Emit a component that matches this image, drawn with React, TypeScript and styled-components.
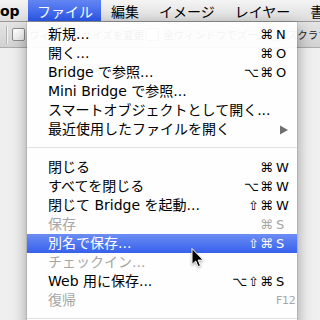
import React from "react";
import styled, { createGlobalStyle, css } from "styled-components";

const Global = createGlobalStyle`
  html, body { margin: 0; padding: 0; }
  body {
    width: 320px;
    height: 320px;
    overflow: hidden;
    background: #eeeeee;
    font-family: "DejaVu Sans", "Noto Sans CJK JP", sans-serif;
  }
`;

const Screen = styled.div`
  position: relative;
  width: 320px;
  height: 320px;
  overflow: hidden;
  display: flex;
  flex-direction: column;
`;

const MenuBar = styled.div`
  height: 21px;
  display: flex;
  align-items: stretch;
  background: linear-gradient(#f4f4f4, #dcdcdc);
  border-bottom: 1px solid #9a9a9a;
  font-size: 14px;
  white-space: nowrap;
  overflow: hidden;
`;

const AppName = styled.div`
  display: flex;
  align-items: center;
  width: 28px;
  flex: none;
  font-weight: bold;
  color: #000;
`;

const MenuTitle = styled.div<{ $active?: boolean }>`
  display: flex;
  align-items: center;
  flex: none;
  padding: 0 10px;
  color: #000;
  ${(p) =>
    p.$active &&
    css`
      padding: 0 8px 0 9px;
      color: #fff;
      background: linear-gradient(#6385f2, #2b57e9);
    `}
`;

const OptionsBar = styled.div`
  height: 25px;
  display: flex;
  align-items: center;
  padding-left: 6px;
  background: linear-gradient(#e4e4e4, #d2d2d2);
  border-bottom: 1px solid #ababab;
  font-size: 10.5px;
  white-space: nowrap;
  overflow: hidden;
`;

const Divider = styled.div`
  flex: none;
  width: 1px;
  height: 18px;
  background: #b4b4b4;
  border-right: 1px solid #f2f2f2;
  margin-right: 4px;
`;

const Check = styled.div`
  flex: none;
  width: 11px;
  height: 11px;
  border: 1px solid #8c8c8c;
  border-radius: 2px;
  background: linear-gradient(#ffffff, #ececec);
`;

const OptionLabel = styled.span`
  flex: none;
  color: #222;
  margin: 0 2px 0 4px;
`;

const Workspace = styled.div`
  flex: 1;
  background: #efefef;
`;

const Dropdown = styled.div`
  position: absolute;
  top: 22px;
  left: 27px;
  width: 270px;
  padding-top: 3px;
  background: rgba(255, 255, 255, 0.94);
  box-shadow: 0 0 0 1px rgba(0, 0, 0, 0.08), 0 5px 14px rgba(0, 0, 0, 0.38);
  font-size: 14px;
`;

const Row = styled.div<{ $disabled?: boolean; $selected?: boolean }>`
  display: flex;
  align-items: center;
  height: 19px;
  line-height: 19px;
  padding: 0 3px 0 21px;
  white-space: nowrap;
  color: ${(p) => (p.$disabled ? "#a6a6a6" : "#000")};
  ${(p) =>
    p.$selected &&
    css`
      color: #fff;
      background: linear-gradient(#6b8df4, #3760ec);
    `}
`;

const Label = styled.span`
  flex: 1;
`;

const Mods = styled.span`
  font-size: 13px;
  letter-spacing: 1px;
  text-align: right;
`;

const Key = styled.span<{ $small?: boolean }>`
  width: 18px;
  margin-left: 2px;
  font-size: ${(p) => (p.$small ? "11px" : "13px")};
  letter-spacing: ${(p) => (p.$small ? "-0.3px" : "0")};
  display: flex;
  align-items: center;
  overflow: visible;
`;

const Separator = styled.div`
  height: 19px;
  display: flex;
  align-items: flex-start;
  padding-top: 8px;
  box-sizing: border-box;
  &::after {
    content: "";
    flex: 1;
    height: 1px;
    background: #e2e2e2;
  }
`;

const Cursor = styled.svg`
  position: absolute;
  left: 190px;
  top: 247px;
  filter: drop-shadow(0 1px 1px rgba(0, 0, 0, 0.35));
`;

type Item =
  | { sep: true }
  | {
      sep?: false;
      label: string;
      mods?: string;
      key?: string;
      disabled?: boolean;
      selected?: boolean;
      submenu?: boolean;
    };

const items: Item[] = [
  { label: "新規...", mods: "⌘", key: "N" },
  { label: "開く...", mods: "⌘", key: "O" },
  { label: "Bridge で参照...", mods: "⌥⌘", key: "O" },
  { label: "Mini Bridge で参照..." },
  { label: "スマートオブジェクトとして開く..." },
  { label: "最近使用したファイルを開く", submenu: true },
  { sep: true },
  { label: "閉じる", mods: "⌘", key: "W" },
  { label: "すべてを閉じる", mods: "⌥⌘", key: "W" },
  { label: "閉じて Bridge を起動...", mods: "⇧⌘", key: "W" },
  { label: "保存", mods: "⌘", key: "S", disabled: true },
  { label: "別名で保存...", mods: "⇧⌘", key: "S", selected: true },
  { label: "チェックイン...", disabled: true },
  { label: "Web 用に保存...", mods: "⌥⇧⌘", key: "S" },
  { label: "復帰", key: "F12", disabled: true },
  { sep: true },
];

export default function App() {
  return (
    <>
      <Global />
      <Screen>
        <MenuBar>
          <AppName>op</AppName>
          <MenuTitle $active>ファイル</MenuTitle>
          <MenuTitle>編集</MenuTitle>
          <MenuTitle>イメージ</MenuTitle>
          <MenuTitle>レイヤー</MenuTitle>
          <MenuTitle>書式</MenuTitle>
        </MenuBar>
        <OptionsBar>
          <Divider />
          <Check />
          <OptionLabel>ウィンドウサイズを変更</OptionLabel>
          <Check />
          <OptionLabel>全ウィンドウでズーム</OptionLabel>
          <Check />
          <OptionLabel>スクラブズーム</OptionLabel>
        </OptionsBar>
        <Workspace />
        <Dropdown>
          {items.map((it, i) =>
            it.sep ? (
              <Separator key={i} />
            ) : (
              <Row key={i} $disabled={it.disabled} $selected={it.selected}>
                <Label>{it.label}</Label>
                {it.mods && <Mods>{it.mods}</Mods>}
                {(it.key || it.submenu) && (
                  <Key $small={it.key === "F12"}>
                    {it.submenu ? (
                      <svg width="12" height="10" viewBox="0 0 12 10">
                        <path d="M4 0.5 L12 5 L4 9.5 Z" fill="#707070" />
                      </svg>
                    ) : (
                      it.key
                    )}
                  </Key>
                )}
              </Row>
            )
          )}
        </Dropdown>
        <Cursor width="16" height="22" viewBox="0 0 16 22">
          <path
            d="M2 1.5 L2 17.5 L5.7 14 L8.1 19.6 L10.5 18.6 L8.1 13.1 L13.2 13.1 Z"
            fill="#000"
            stroke="#fff"
            strokeWidth="1"
            strokeLinejoin="round"
          />
        </Cursor>
      </Screen>
    </>
  );
}
